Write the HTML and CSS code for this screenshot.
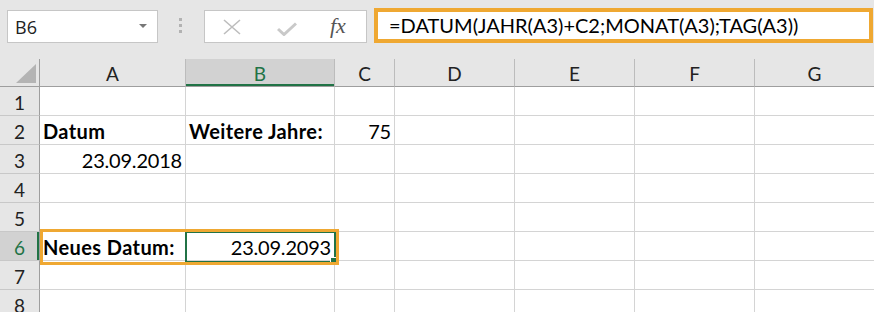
FILE: index.html
```html
<!DOCTYPE html>
<html lang="de">
<head>
  <meta charset="UTF-8">
  <title>DATUM + Jahre</title>
  <link rel="stylesheet" href="styles.css">
</head>
<body>
  <!-- Formula bar -->
  <div class="toolbar">
    <div class="namebox">
      <span>B6</span>
      <span class="caret"></span>
    </div>
    <div class="grip"><i></i><i></i><i></i></div>
    <div class="fxbox">
      <svg class="icon-x" width="18" height="16" viewBox="0 0 18 16">
        <path d="M1 1 L17 15 M17 1 L1 15" stroke="#bdbdbd" stroke-width="1.6" fill="none"/>
      </svg>
      <svg class="icon-check" width="20" height="14" viewBox="0 0 20 14">
        <path d="M1 7 L7 12.5 L19 1.5" stroke="#c9c9c9" stroke-width="3" fill="none"/>
      </svg>
      <span class="fx">fx</span>
    </div>
    <div class="formula">=DATUM(JAHR(A3)+C2;MONAT(A3);TAG(A3))</div>
  </div>

  <!-- Sheet -->
  <div class="sheet">
    <div class="corner"><div class="tri"></div></div>
    <div class="colhead">A</div>
    <div class="colhead sel">B</div>
    <div class="colhead">C</div>
    <div class="colhead">D</div>
    <div class="colhead">E</div>
    <div class="colhead">F</div>
    <div class="colhead">G</div>

    <div class="rowhead">1</div>
    <div class="cell"></div><div class="cell"></div><div class="cell"></div><div class="cell"></div><div class="cell"></div><div class="cell"></div><div class="cell"></div>

    <div class="rowhead">2</div>
    <div class="cell bold">Datum</div><div class="cell bold">Weitere Jahre:</div><div class="cell num">75</div><div class="cell"></div><div class="cell"></div><div class="cell"></div><div class="cell"></div>

    <div class="rowhead">3</div>
    <div class="cell num">23.09.2018</div><div class="cell"></div><div class="cell"></div><div class="cell"></div><div class="cell"></div><div class="cell"></div><div class="cell"></div>

    <div class="rowhead">4</div>
    <div class="cell"></div><div class="cell"></div><div class="cell"></div><div class="cell"></div><div class="cell"></div><div class="cell"></div><div class="cell"></div>

    <div class="rowhead">5</div>
    <div class="cell"></div><div class="cell"></div><div class="cell"></div><div class="cell"></div><div class="cell"></div><div class="cell"></div><div class="cell"></div>

    <div class="rowhead sel">6</div>
    <div class="cell bold">Neues Datum:</div><div class="cell num">23.09.2093</div><div class="cell"></div><div class="cell"></div><div class="cell"></div><div class="cell"></div><div class="cell"></div>

    <div class="rowhead">7</div>
    <div class="cell"></div><div class="cell"></div><div class="cell"></div><div class="cell"></div><div class="cell"></div><div class="cell"></div><div class="cell"></div>

    <div class="rowhead">8</div>
    <div class="cell"></div><div class="cell"></div><div class="cell"></div><div class="cell"></div><div class="cell"></div><div class="cell"></div><div class="cell"></div>

    <!-- Selection + highlight overlays -->
    <div class="active-cell"></div>
    <div class="fill-handle"></div>
    <div class="highlight"></div>
  </div>
</body>
</html>
```

FILE: styles.css
```css
/* General */
body {
  margin: 0;
  background-color: #e6e6e6;
  font-family: Lato, 'Liberation Sans', sans-serif;
  color: #000;
  overflow: hidden;
}

/* Formula bar */
.toolbar {
  height: 59px;
  box-sizing: border-box;
  padding-top: 8px;
  display: flex;
  align-items: flex-start;
}

.namebox {
  margin: 2px 0 0 7px;
  width: 151px;
  height: 33px;
  box-sizing: border-box;
  background-color: #fff;
  border: 1px solid #c6c6c6;
  display: flex;
  align-items: center;
  justify-content: space-between;
  padding: 0 10px 0 7px;
  font-family: 'Open Sans', sans-serif;
  font-size: 18px;
  color: #222;
}

.caret {
  width: 0;
  height: 0;
  border-left: 4px solid transparent;
  border-right: 4px solid transparent;
  border-top: 4px solid #777;
  margin-top: -2px;
}

.grip {
  margin: 10px 0 0 21px;
  display: flex;
  flex-direction: column;
  gap: 3px;
}

.grip i {
  display: block;
  width: 3px;
  height: 3px;
  background-color: #b2b2b2;
}

.fxbox {
  margin: 2px 0 0 22px;
  width: 163px;
  height: 33px;
  box-sizing: border-box;
  background-color: #fff;
  border: 1px solid #c6c6c6;
  display: flex;
  align-items: center;
  padding-left: 18px;
}

.icon-check {
  margin-left: 36px;
  margin-top: 4px;
}

.fx {
  margin-left: 33px;
  font-family: 'Liberation Serif', serif;
  font-style: italic;
  font-size: 22px;
  color: #555;
  margin-top: -2px;
}

.formula {
  margin-left: 7px;
  width: 499px;
  height: 35px;
  box-sizing: border-box;
  background-color: #fff;
  border: 4px solid #efa832;
  padding-left: 11px;
  font-size: 20px;
  line-height: 27px;
}

/* Sheet */
.sheet {
  position: relative;
  background-color: #fff;
  display: grid;
  grid-template-columns: 40px 146px 149px 60px 120px 120px 120px 120px;
  grid-template-rows: 28px repeat(8, 29px);
}

.sheet > div {
  box-sizing: border-box;
}

.corner {
  background-color: #e6e6e6;
  border-right: 1px solid #9e9e9e;
  border-bottom: 1px solid #9e9e9e;
  display: flex;
  justify-content: flex-end;
  align-items: flex-end;
  padding: 0 3px 3px 0;
}

.tri {
  width: 20px;
  height: 19px;
  background-color: #b4b4b4;
  clip-path: polygon(100% 0, 100% 100%, 0 100%);
}

.colhead {
  background-color: #e6e6e6;
  border-right: 1px solid #bcbcbc;
  border-bottom: 1px solid #9e9e9e;
  text-align: center;
  font-size: 19px;
  line-height: 30px;
  color: #222;
}

.colhead.sel {
  background-color: #d2d2d2;
  color: #217346;
  box-shadow: inset 0 -2px 0 #217346;
}

.rowhead {
  background-color: #e6e6e6;
  border-right: 1px solid #9e9e9e;
  border-bottom: 1px solid #c8c8c8;
  text-align: center;
  font-size: 19px;
  line-height: 31px;
  color: #222;
}

.rowhead.sel {
  background-color: #d2d2d2;
  color: #217346;
  box-shadow: inset -2px 0 0 #217346;
}

.cell {
  border-right: 1px solid #d4d4d4;
  border-bottom: 1px solid #d4d4d4;
  padding: 0 3px;
  font-size: 20px;
  line-height: 30px;
  white-space: nowrap;
}

.cell.bold {
  font-weight: bold;
  letter-spacing: 0.4px;
}

.cell.num {
  text-align: right;
  letter-spacing: -0.2px;
}

/* Overlays */
.active-cell {
  position: absolute;
  left: 185px;
  top: 172px;
  width: 151px;
  height: 32px;
  border: 2px solid #217346;
}

.fill-handle {
  position: absolute;
  left: 330px;
  top: 198px;
  width: 7px;
  height: 7px;
  background-color: #217346;
  border: 1px solid #fff;
}

.highlight {
  position: absolute;
  left: 40px;
  top: 170px;
  width: 299px;
  height: 36px;
  border: 3px solid #efa832;
}
```
